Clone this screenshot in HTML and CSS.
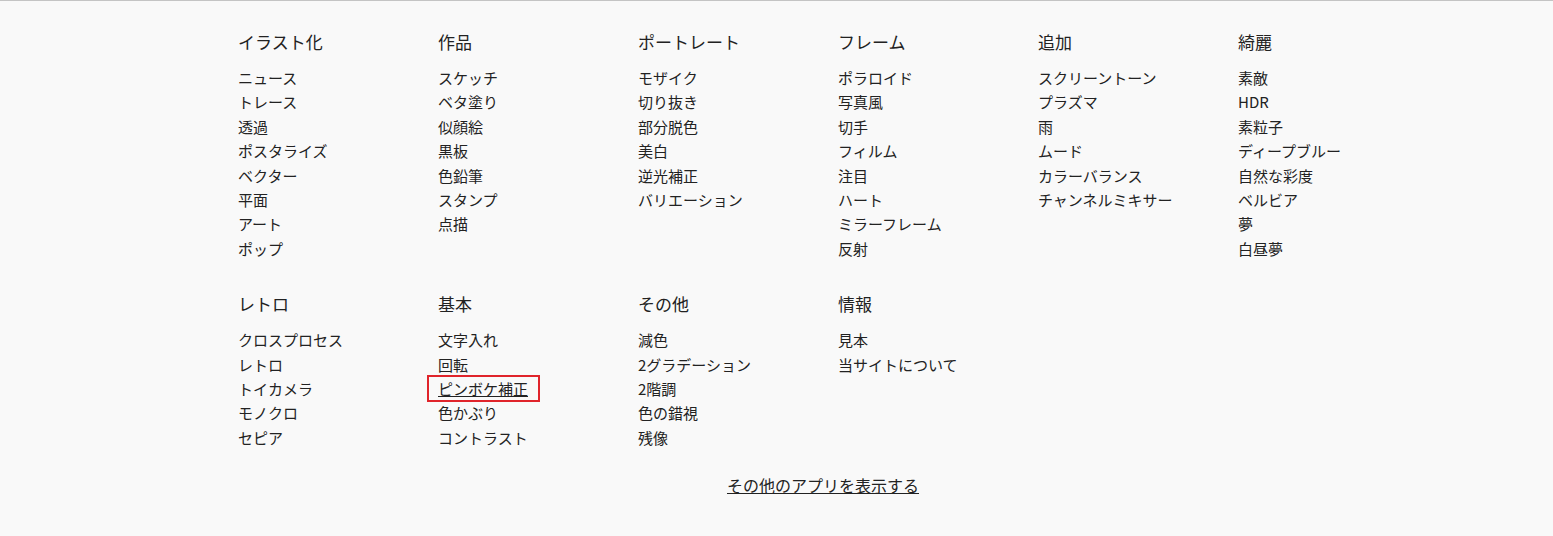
FILE: index.html
```html
<!DOCTYPE html>
<html lang="ja">
<head>
    <meta charset="UTF-8">
    <meta name="viewport" content="width=device-width, initial-scale=1.0">
    <title>メニュー</title>
    <link rel="stylesheet" href="styles.css">
</head>
<body>
    <div class="container">
        <div class="menu">
            <div class="group">
                <h3>イラスト化</h3>
                <ul>
                    <li><a href="#">ニュース</a></li>
                    <li><a href="#">トレース</a></li>
                    <li><a href="#">透過</a></li>
                    <li><a href="#">ポスタライズ</a></li>
                    <li><a href="#">ベクター</a></li>
                    <li><a href="#">平面</a></li>
                    <li><a href="#">アート</a></li>
                    <li><a href="#">ポップ</a></li>
                </ul>
            </div>
            <div class="group">
                <h3>作品</h3>
                <ul>
                    <li><a href="#">スケッチ</a></li>
                    <li><a href="#">ベタ塗り</a></li>
                    <li><a href="#">似顔絵</a></li>
                    <li><a href="#">黒板</a></li>
                    <li><a href="#">色鉛筆</a></li>
                    <li><a href="#">スタンプ</a></li>
                    <li><a href="#">点描</a></li>
                </ul>
            </div>
            <div class="group">
                <h3>ポートレート</h3>
                <ul>
                    <li><a href="#">モザイク</a></li>
                    <li><a href="#">切り抜き</a></li>
                    <li><a href="#">部分脱色</a></li>
                    <li><a href="#">美白</a></li>
                    <li><a href="#">逆光補正</a></li>
                    <li><a href="#">バリエーション</a></li>
                </ul>
            </div>
            <div class="group">
                <h3>フレーム</h3>
                <ul>
                    <li><a href="#">ポラロイド</a></li>
                    <li><a href="#">写真風</a></li>
                    <li><a href="#">切手</a></li>
                    <li><a href="#">フィルム</a></li>
                    <li><a href="#">注目</a></li>
                    <li><a href="#">ハート</a></li>
                    <li><a href="#">ミラーフレーム</a></li>
                    <li><a href="#">反射</a></li>
                </ul>
            </div>
            <div class="group">
                <h3>追加</h3>
                <ul>
                    <li><a href="#">スクリーントーン</a></li>
                    <li><a href="#">プラズマ</a></li>
                    <li><a href="#">雨</a></li>
                    <li><a href="#">ムード</a></li>
                    <li><a href="#">カラーバランス</a></li>
                    <li><a href="#">チャンネルミキサー</a></li>
                </ul>
            </div>
            <div class="group">
                <h3>綺麗</h3>
                <ul>
                    <li><a href="#">素敵</a></li>
                    <li><a href="#">HDR</a></li>
                    <li><a href="#">素粒子</a></li>
                    <li><a href="#">ディープブルー</a></li>
                    <li><a href="#">自然な彩度</a></li>
                    <li><a href="#">ベルビア</a></li>
                    <li><a href="#">夢</a></li>
                    <li><a href="#">白昼夢</a></li>
                </ul>
            </div>

            <div class="group">
                <h3>レトロ</h3>
                <ul>
                    <li><a href="#">クロスプロセス</a></li>
                    <li><a href="#">レトロ</a></li>
                    <li><a href="#">トイカメラ</a></li>
                    <li><a href="#">モノクロ</a></li>
                    <li><a href="#">セピア</a></li>
                </ul>
            </div>
            <div class="group">
                <h3>基本</h3>
                <ul>
                    <li><a href="#">文字入れ</a></li>
                    <li><a href="#">回転</a></li>
                    <li><a href="#" class="focused">ピンボケ補正</a></li>
                    <li><a href="#">色かぶり</a></li>
                    <li><a href="#">コントラスト</a></li>
                </ul>
            </div>
            <div class="group">
                <h3>その他</h3>
                <ul>
                    <li><a href="#">減色</a></li>
                    <li><a href="#">2グラデーション</a></li>
                    <li><a href="#">2階調</a></li>
                    <li><a href="#">色の錯視</a></li>
                    <li><a href="#">残像</a></li>
                </ul>
            </div>
            <div class="group">
                <h3>情報</h3>
                <ul>
                    <li><a href="#">見本</a></li>
                    <li><a href="#">当サイトについて</a></li>
                </ul>
            </div>
        </div>

        <div class="more">
            <a href="#">その他のアプリを表示する</a>
        </div>
    </div>
</body>
</html>
```

FILE: styles.css
```css
* {
    margin: 0;
    padding: 0;
    box-sizing: border-box;
}

body {
    background-color: #f9f9f9;
    border-top: 1px solid #c4c4c4;
    color: #222;
    font-family: "Noto Sans CJK JP", "Noto Sans", sans-serif;
}

.container {
    width: 1170px;
    margin-left: 238px;
    padding-top: 29px;
}

/* メニュー */
.menu {
    display: grid;
    grid-template-columns: repeat(6, 200px);
    row-gap: 31px;
}
.group h3 {
    font-size: 17px;
    font-weight: normal;
    line-height: 24px;
    margin-bottom: 12px;
}
.group ul {
    list-style: none;
}
.group li {
    font-size: 15px;
    line-height: 24.4px;
}
.group a {
    color: #222;
    text-decoration: none;
}
.group a:hover {
    text-decoration: underline;
}
.group a.focused {
    text-decoration: underline;
    outline: 2px solid #e0242b;
    padding: 1px 10px 1px 9px;
    margin: 0 -10px 0 -9px;
}

/* その他のアプリ */
.more {
    text-align: center;
    margin-top: 23px;
}
.more a {
    color: #222;
    font-size: 16px;
    line-height: 24px;
    text-decoration: underline;
}
```
